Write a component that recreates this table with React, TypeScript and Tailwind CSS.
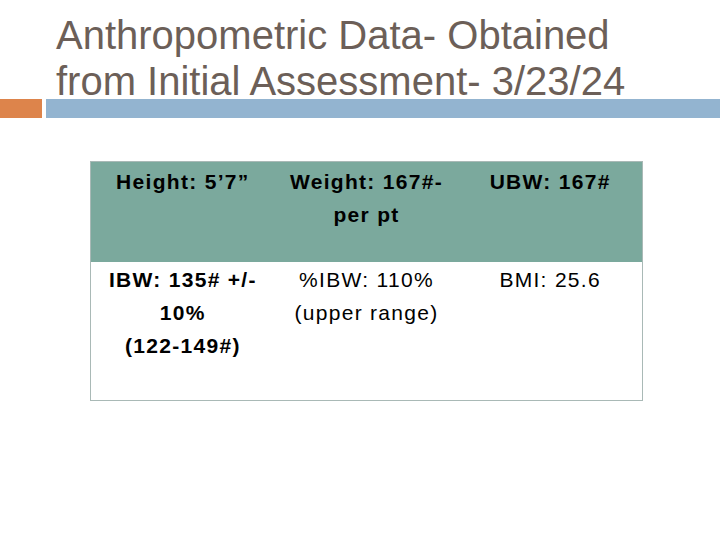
export default function App() {
    return (
        <div className="w-[720px] h-[540px] bg-white overflow-hidden" style={{ fontFamily: '"Liberation Sans", Arial, sans-serif' }}>
            <div className="pl-[56px] pt-[12px] h-[99px]">
                <h1 className="text-[40px] leading-[46px] text-[#6c5f58]">
                    Anthropometric Data- Obtained
                    <br />
                    from Initial Assessment- 3/23/24
                </h1>
            </div>
            <div className="flex gap-[4px] h-[19px]">
                <div className="w-[42px] bg-[#dd844b]" />
                <div className="flex-1 bg-[#93b4d0]" />
            </div>
            <div className="pl-[90px] pt-[43px]">
                <div className="w-[553px] border border-[#a9b9b6] text-[21px] leading-[33px] tracking-[1.3px] text-black">
                    <div className="grid grid-cols-3 bg-[#7ba99d] h-[100px] pt-[3px] font-bold">
                        <div className="text-center px-1">Height: 5’7”</div>
                        <div className="text-center px-1">Weight: 167#-<br />per pt</div>
                        <div className="text-center px-1">UBW: 167#</div>
                    </div>
                    <div className="grid grid-cols-3 bg-white h-[138px] pt-[1px]">
                        <div className="text-center px-1 font-bold">IBW: 135# +/-<br />10%<br />(122-149#)</div>
                        <div className="text-center px-1">%IBW: 110%<br />(upper range)</div>
                        <div className="text-center px-1">BMI: 25.6</div>
                    </div>
                </div>
            </div>
        </div>
    )
}
